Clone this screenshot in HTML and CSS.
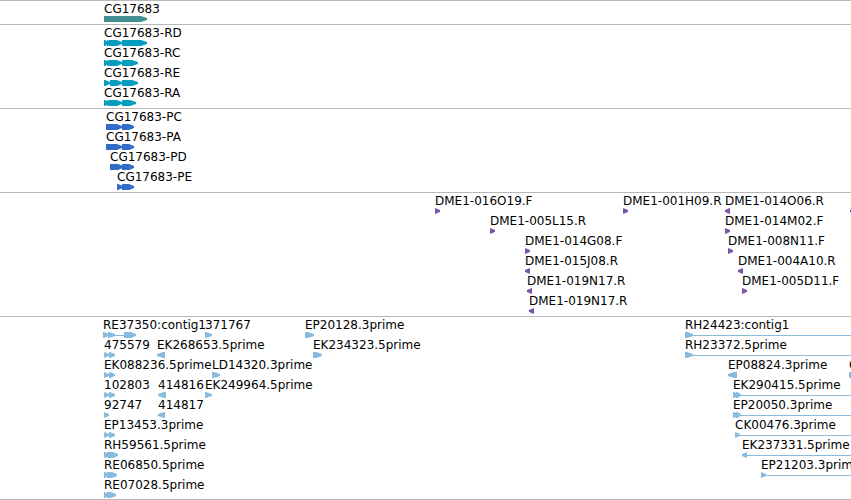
FILE: index.html
```
<!DOCTYPE html>
<html lang="en">
<head>
<meta charset="utf-8">
<title>Genome region CG17683</title>
<link rel="stylesheet" href="styles.css">
</head>
<body>
<main id="browser" class="browser"></main>
<script src="tracks.js"></script>
</body>
</html>
```
FILE: styles.css
```
body {
  margin: 0;
  background: #fff;
  color: #000;
  font-family: "DejaVu Sans", sans-serif;
  font-size: 12px;
}

.browser {
  overflow: hidden;
  border-bottom: 1px solid #b8b8b8;
}

.track {
  border-top: 1px solid #b8b8b8;
  padding: 2px 0 1px;
}

.track:last-child {
  padding-bottom: 0;
}

.row {
  position: relative;
  height: 20px;
}

.feature {
  position: absolute;
  top: 0;
}

.label {
  display: block;
  height: 13px;
  line-height: 12px;
  white-space: nowrap;
}

.glyph {
  display: block;
  width: 8px;
  height: 6px;
  overflow: visible;
  fill: currentColor;
}

.gene .glyph { color: #438e91; }
.transcript .glyph { color: #049dbd; }
.protein .glyph { color: #336bc8; }
.clone .glyph { color: #7857a9; }
.est .glyph { color: #88bbdd; }
```
FILE: tracks.js
```
// Exon: [start, end, tip length]; a negative tip points left.
// A feature is [label, position, exons, connector start, connector end].
const BEYOND = 4000;
const R = [[0, 5, 5]];
const L = [[0, 5, -5]];
const PAIR = [[0, 5, 5], [5, 11, 5]];
const CLUSTER = [[0, 4, 3], [3, 9, 3], [6, 13, 5]];

const tracks = [
  ["gene", [[["CG17683", 104, [[0, 43, 6]]]]]],
  ["transcript", [
    [["CG17683-RD", 104, [[0, 4, 3], [3, 6, 2], [5, 18, 5], [18, 43, 6]]]],
    [["CG17683-RC", 104, [[0, 4, 3], [3, 6, 2], [5, 18, 5], [18, 34, 6]]]],
    [["CG17683-RE", 104, [[0, 6, 5], [6, 18, 5], [18, 34, 6]]]],
    [["CG17683-RA", 104, [[0, 4, 3], [3, 6, 2], [5, 18, 5], [18, 32, 6]]]]
  ]],
  ["protein", [
    [["CG17683-PC", 106, [[0, 3, 1], [2, 16, 5], [16, 28, 5]]]],
    [["CG17683-PA", 106, [[0, 3, 1], [2, 16, 5], [16, 28, 5]]]],
    [["CG17683-PD", 110, [[0, 13, 5], [12, 24, 5]]]],
    [["CG17683-PE", 117, [[0, 6, 5], [5, 17, 5]]]]
  ]],
  ["clone", [
    [["DME1-016O19.F", 435, R], ["DME1-001H09.R", 623, R], ["DME1-014O06.R", 725, L], ["", 850, L]],
    [["DME1-005L15.R", 490, R], ["DME1-014M02.F", 725, R]],
    [["DME1-014G08.F", 525, R], ["DME1-008N11.F", 728, R]],
    [["DME1-015J08.R", 525, L], ["DME1-004A10.R", 738, L]],
    [["DME1-019N17.R", 527, L], ["DME1-005D11.F", 742, R]],
    [["DME1-019N17.R", 529, L]]
  ]],
  ["est", [
    [["RE37350:contig1", 103, [[0, 6, 5], [5, 12, 6], [21, 33, 5]], 0, 28], ["371767", 205, [[0, 7, 6]]],
      ["EP20128.3prime", 305, [[0, 9, 6]]], ["RH24423:contig1", 685, [[0, 8, 6]], 0, BEYOND]],
    [["475579", 104, PAIR], ["EK268653.5prime", 157, [[0, 8, -6]]],
      ["EK234323.5prime", 313, [[0, 9, 6]]], ["RH23372.5prime", 685, [[0, 8, 6]], 0, BEYOND]],
    [["EK088236.5prime", 104, PAIR], ["LD14320.3prime", 212, [[0, 8, 6]]],
      ["EP08824.3prime", 728, [[0, 9, -6]]], ["C", 849, [[0, 8, 5]]]],
    [["102803", 104, PAIR], ["414816", 158, [[0, 8, -6]]],
      ["EK249964.5prime", 205, [[0, 7, 6]]], ["EK290415.5prime", 733, [[0, 5, 4], [3, 8, 4]], 0, BEYOND]],
    [["92747", 104, [[0, 5, 5]]], ["414817", 158, [[0, 7, -6]]],
      ["EP20050.3prime", 733, [[0, 5, 4], [3, 8, 4]], 0, BEYOND]],
    [["EP13453.3prime", 104, PAIR], ["CK00476.3prime", 735, [[0, 5, 5]], 0, BEYOND]],
    [["RH59561.5prime", 104, [[0, 4, 3], [3, 9, 3], [6, 14, 5]]], ["EK237331.5prime", 742, L, 0, BEYOND]],
    [["RE06850.5prime", 104, CLUSTER], ["EP21203.3prime", 761, [[0, 5, 5]], 0, BEYOND]],
    [["RE07028.5prime", 104, [[0, 4, 3], [3, 8, 3], [6, 12, 5]]]]
  ]]
];

// Tips are blunt: two pixels high at the point.
function exonPath([a, b, tip]) {
  const [base, point] = tip > 0 ? [a, b] : [b, a];
  const shoulder = tip > 0 ? Math.max(a, b - tip) : Math.min(b, a - tip);
  return `M${base} 0H${shoulder}L${point} 2V4L${shoulder} 6H${base}Z`;
}

function feature([label, x, exons, from, to]) {
  const line = to ? `M${from} 3H${to}V4H${from}Z` : "";
  const paths = [...exons.map(exonPath), line].filter(Boolean).map(d => `<path d="${d}"/>`).join("");
  return `<div class="feature" style="left:${x}px"><span class="label">${label}</span>` +
    `<svg class="glyph" viewBox="0 0 8 6" aria-hidden="true">${paths}</svg></div>`;
}

document.getElementById("browser").innerHTML = tracks.map(([kind, rows]) =>
  `<section class="track ${kind}">` +
  rows.map(row => `<div class="row">${row.map(feature).join("")}</div>`).join("") +
  `</section>`).join("");
```
